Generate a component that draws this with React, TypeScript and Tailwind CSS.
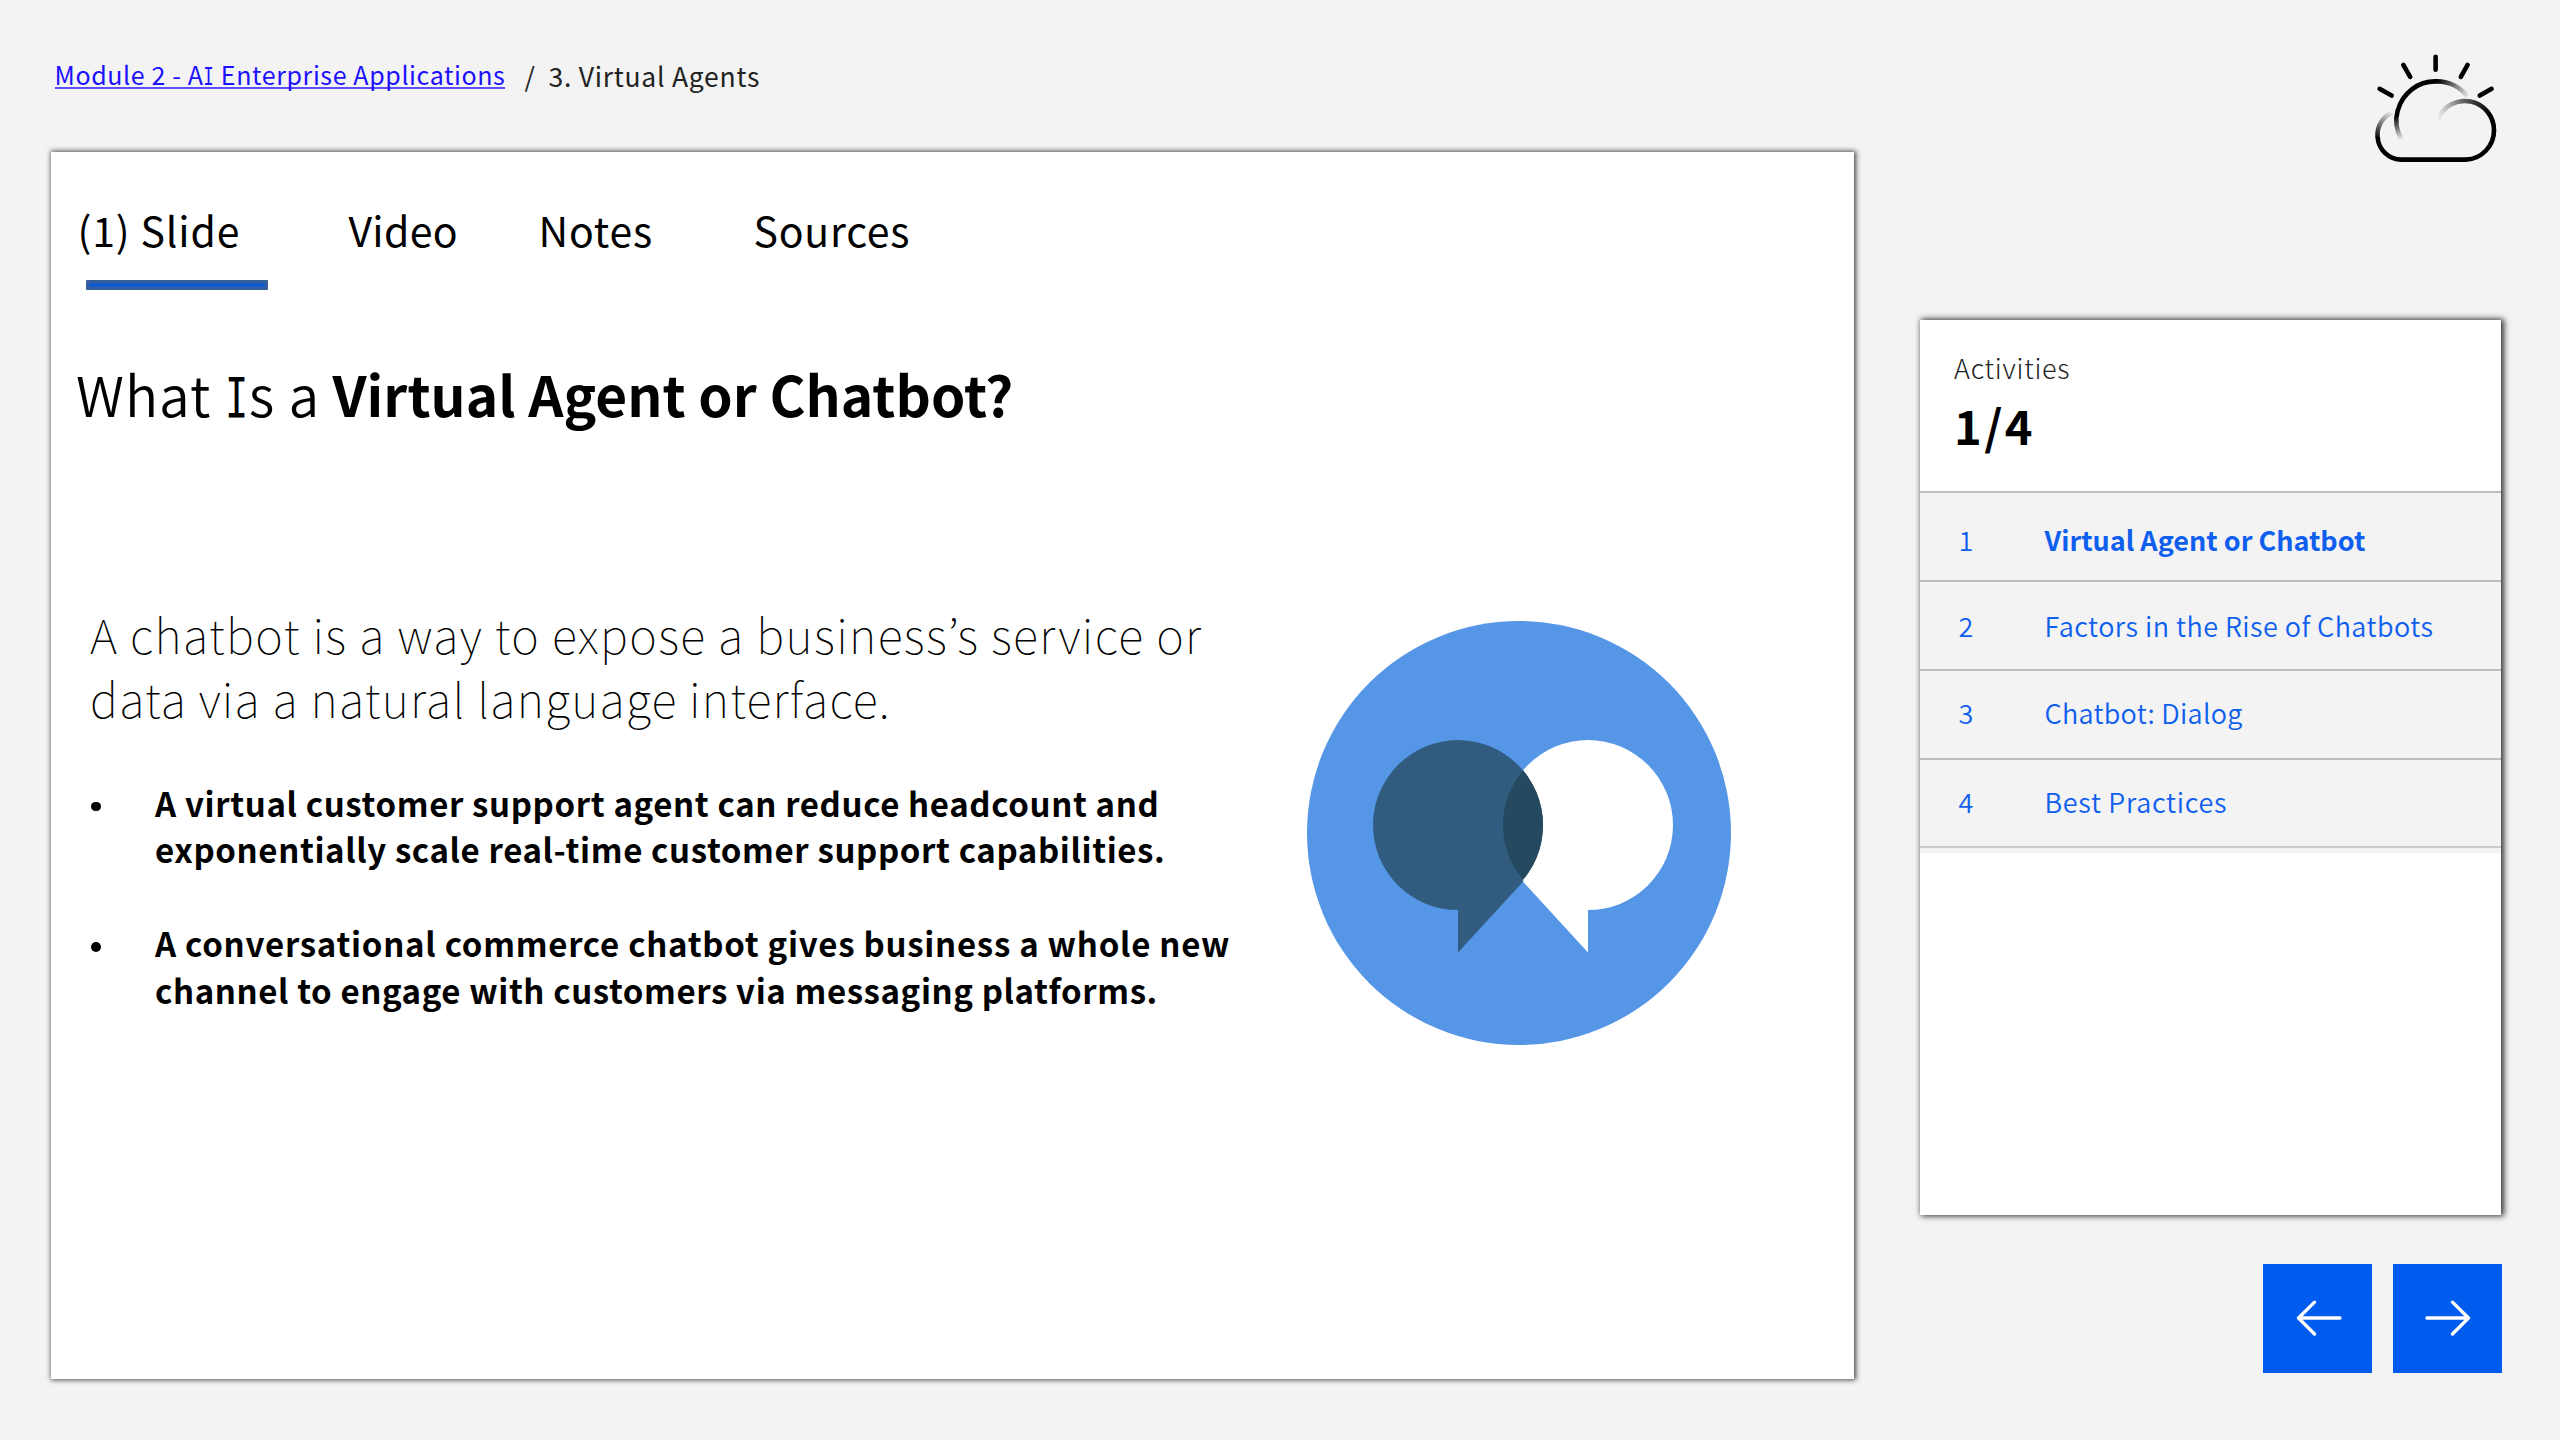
type Activity = { title: string; row: string; label: string };

const activities: Activity[] = [
  { title: "Virtual Agent or Chatbot", row: "pt-[26.4px]", label: "font-bold" },
  { title: "Factors in the Rise of Chatbots", row: "pt-[23.7px]", label: "font-[350] tracking-[0.47px]" },
  { title: "Chatbot: Dialog", row: "pt-[22.4px]", label: "font-[350] tracking-[0.3px]" },
  { title: "Best Practices", row: "pt-[22.4px]", label: "font-[350] tracking-[0.7px]" },
];

const tabs = [
  { title: "(1) Slide", style: "w-[271px] tracking-[0.85px]" },
  { title: "Video", style: "w-[190px] tracking-[0.3px]" },
  { title: "Notes", style: "w-[215px] tracking-[0.8px]" },
  { title: "Sources", style: "tracking-[0.75px]" },
];

/* Capital I with serifs, narrowed to sit among the sans-serif letters. */
function SerifI() {
  return (
    <span className="-mx-[0.09em] inline-block scale-x-[0.7] font-['DejaVu_Sans_Mono',monospace] leading-none">I</span>
  );
}

function CloudIcon() {
  return (
    <svg viewBox="0 0 200 150" className="h-[150px] w-[200px]" fill="none" stroke="#000" strokeWidth="4.6">
      <defs>
        <linearGradient id="sunLeft" gradientUnits="userSpaceOnUse" x1="62" y1="110" x2="57" y2="86">
          <stop offset="0" stopOpacity="0" />
          <stop offset="1" />
        </linearGradient>
        <linearGradient id="sunRight" gradientUnits="userSpaceOnUse" x1="97" y1="51" x2="129" y2="68">
          <stop offset="0" />
          <stop offset="1" stopOpacity="0" />
        </linearGradient>
        <linearGradient id="cloudLeft" gradientUnits="userSpaceOnUse" x1="53" y1="82" x2="38" y2="110">
          <stop offset="0" stopOpacity="0" />
          <stop offset="1" />
        </linearGradient>
        <linearGradient id="cloudRight" gradientUnits="userSpaceOnUse" x1="97" y1="89" x2="150" y2="88">
          <stop offset="0" stopOpacity="0" />
          <stop offset="0.5" stopOpacity="0.6" />
          <stop offset="1" />
        </linearGradient>
      </defs>
      <path d="M61.3 109.3A38.8 38.8 0 0 1 57.8 80" stroke="url(#sunLeft)" />
      <path d="M57.8 80.5A38.8 38.8 0 0 1 96 51.4" />
      <path d="M95.5 51.4A38.8 38.8 0 0 1 127.5 66.5" stroke="url(#sunRight)" />
      <path d="M52.7 82.3A24.3 24.3 0 0 0 37.6 107" stroke="url(#cloudLeft)" />
      <path d="M37.6 106.5A24 24 0 0 0 61.5 129.6H126A29.2 29.2 0 0 0 154 100" />
      <path d="M97.7 89.3A29.2 29.2 0 0 1 154 100.5" stroke="url(#cloudRight)" />
      <path
        strokeLinecap="round"
        d="M95.6 26.7V39.7M63.3 34.9L70.2 46.9M127.6 34.9L120.8 46.9M39.6 58.8L51.6 65.6M151.6 58.8L139.8 65.6"
      />
    </svg>
  );
}

function ChatIllustration() {
  return (
    <svg viewBox="1306.7 621.3 424 424" className="mt-[20px] h-[424px] w-[424px] shrink-0">
      <defs>
        <clipPath id="leftBubble">
          <circle cx="1457.7" cy="825.4" r="85" />
        </clipPath>
      </defs>
      <circle cx="1518.7" cy="833.3" r="212" fill="#5596e6" />
      <g fill="#fff">
        <circle cx="1587.7" cy="825.4" r="85" />
        <path d="M1587.7 860V952.7L1522.7 882L1540 850Z" />
      </g>
      <g fill="#315c7f">
        <circle cx="1457.7" cy="825.4" r="85" />
        <path d="M1457.7 860V952.7L1522.7 882L1505 850Z" />
      </g>
      <circle cx="1587.7" cy="825.4" r="85" fill="#254a5f" clipPath="url(#leftBubble)" />
    </svg>
  );
}

function Bullet({ children }: { children: React.ReactNode }) {
  return (
    <li className="flex">
      <span className="mt-[22px] mr-[54.5px] size-[9.5px] shrink-0 rounded-full bg-black" />
      <p className="text-[33px] leading-[46.4px] font-bold whitespace-nowrap">{children}</p>
    </li>
  );
}

function Slide() {
  return (
    <main className="h-[1227px] w-[1803px] bg-white pt-[47px] shadow-[1px_0_5px_1px_rgba(0,0,0,0.7)]">
      <nav className="flex pl-[26.5px] text-[41px] leading-[60px] whitespace-nowrap">
        {tabs.map((t) => (
          <a key={t.title} className={t.style}>{t.title}</a>
        ))}
      </nav>
      <div className="mt-[21.7px] ml-[35px] h-[10px] w-[182px] rounded-[1px] border-[3px] border-[#36609b] bg-[#1159cf]" />
      <h1 className="mt-[62.5px] flex pl-[25px] text-[55px] leading-[80px] whitespace-nowrap">
        <span className="w-[256.5px] font-[350] tracking-[1px]">
          What <SerifI />s a
        </span>
        <strong className="font-bold tracking-[0.05px]">Virtual Agent or Chatbot?</strong>
      </h1>
      <div className="mt-[168px] flex pl-[40px]">
        <section className="w-[1215.7px]">
          <p className="-ml-[1px] pt-[1px] text-[47px] leading-[64.6px] font-thin whitespace-nowrap">
            <span className="block tracking-[1.37px]">A chatbot is a way to expose a business’s service or</span>
            <span className="block tracking-[1.2px]">data via a natural language interface.</span>
          </p>
          <ul className="mt-[49px] flex flex-col gap-[47.6px]">
            <Bullet>
              <span className="block tracking-[0.63px]">A virtual customer support agent can reduce headcount and</span>
              <span className="block tracking-[0.62px]">exponentially scale real-time customer support capabilities.</span>
            </Bullet>
            <Bullet>
              <span className="block tracking-[0.73px]">A conversational commerce chatbot gives business a whole new</span>
              <span className="block tracking-[0.6px]">channel to engage with customers via messaging platforms.</span>
            </Bullet>
          </ul>
        </section>
        <ChatIllustration />
      </div>
    </main>
  );
}

function ActivityPanel() {
  return (
    <aside className="mt-[140.3px] ml-[66px] h-[894.7px] w-[581px] bg-white shadow-[2px_0_6px_1px_rgba(0,0,0,0.8)]">
      <header className="h-[171px] pt-[27.7px] pl-[34px]">
        <p className="text-[27px] leading-[40px] font-light tracking-[0.75px] text-[#222]">Activities</p>
        <p className="mt-[7.5px] text-[47px] leading-[60px] font-bold tracking-[2.4px]">1/4</p>
      </header>
      <ol className="bg-[#f3f3f3] text-[27px] leading-[40px] text-[#0f5fef]">
        {activities.map((a, i) => (
          <li key={a.title} className={`flex h-[88.75px] border-t-2 border-[#bdbdbd] pl-[38.5px] ${a.row}`}>
            <span className="w-[86px] font-[350]">{i + 1}</span>
            <a className={a.label}>{a.title}</a>
          </li>
        ))}
        <li className="h-[7px] border-t-2 border-[#cacaca]" />
      </ol>
    </aside>
  );
}

function Arrow({ back = false }: { back?: boolean }) {
  return (
    <button className="flex size-[109px] items-center justify-center bg-[#005cee]">
      <svg
        viewBox="0 0 46 36"
        className={back ? "ml-[2px] h-[36px] w-[46px]" : "h-[36px] w-[46px] -scale-x-100"}
        fill="none"
        stroke="#fff"
        strokeWidth="3.3"
        strokeLinecap="round"
        strokeLinejoin="round"
      >
        <path d="M44 18H2.5M18.5 2.2L2.5 18L18.5 34" />
      </svg>
    </button>
  );
}

export default function App() {
  return (
    <div className="flex h-[1440px] w-[2560px] overflow-hidden bg-[#f3f3f3] pl-[51px] font-['Noto_Sans_CJK_JP',sans-serif] text-black">
      <div className="w-[1803px]">
        <nav className="flex h-[151.5px] items-start pl-[3.5px] leading-[40px] whitespace-nowrap">
          <a className="mt-[53.8px] h-[35px] border-b-2 border-[#5a4dff] text-[25px] tracking-[0.61px] text-[#1c10ff]">
            Module 2 - A<SerifI /> Enterprise Applications
          </a>
          <span className="mt-[55.6px] ml-[19px] w-[24px] text-[26.5px] text-[#222]">/</span>
          <span className="mt-[55.6px] text-[26.5px] tracking-[0.75px] text-[#222]">3. Virtual Agents</span>
        </nav>
        <Slide />
      </div>
      <div className="flex flex-col pt-[30px]">
        <div className="-mr-[39px] flex justify-end">
          <CloudIcon />
        </div>
        <ActivityPanel />
        <div className="-mr-[1px] mt-[48.7px] flex justify-end gap-[20.6px]">
          <Arrow back />
          <Arrow />
        </div>
      </div>
    </div>
  );
}
